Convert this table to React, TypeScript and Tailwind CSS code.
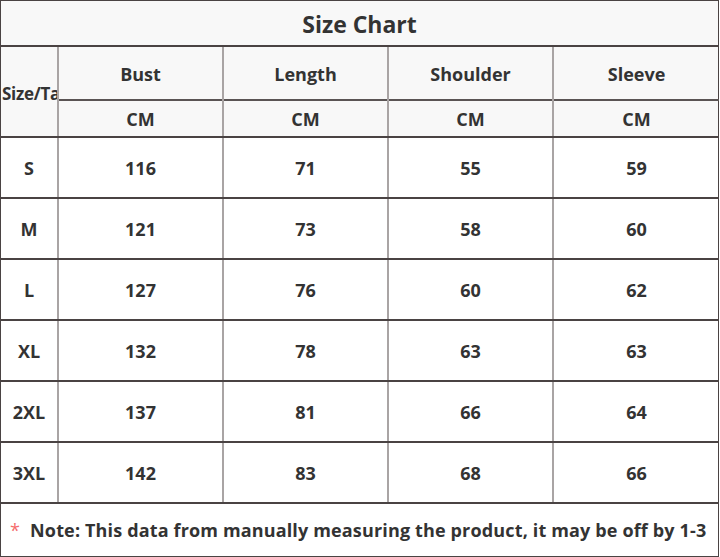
import React from "react";

const columns = ["Bust", "Length", "Shoulder", "Sleeve"];

const rows: [string, number[]][] = [
  ["S", [116, 71, 55, 59]],
  ["M", [121, 73, 58, 60]],
  ["L", [127, 76, 60, 62]],
  ["XL", [132, 78, 63, 63]],
  ["2XL", [137, 81, 66, 64]],
  ["3XL", [142, 83, 68, 66]],
];

export default function App() {
  return (
    <div className="w-[720px] h-[557px] bg-white text-[#333] font-['Open_Sans',sans-serif]">
      <div className="w-[719px] border border-[#4a4343]">
        {/* title */}
        <div className="h-[46px] pt-[3px] bg-[#f8f8f8] border-b-2 border-[#4a4343] flex items-center justify-center text-[23px] font-bold">
          Size Chart
        </div>

        {/* header */}
        <div className="flex h-[91px] bg-[#f8f8f8] border-b-2 border-[#4a4343]">
          <div className="w-[58px] shrink-0 border-r-2 border-[#a9a4a4] overflow-hidden whitespace-nowrap flex items-center pl-[1px] pt-[5px] text-[17px] font-bold tracking-[-0.3px]">
            Size/Tag
          </div>
          {columns.map((c, i) => (
            <div key={c} className={`w-[165px] shrink-0 flex flex-col ${i < 3 ? "border-r-2 border-[#a9a4a4]" : ""}`}>
              <div className="h-[54px] pt-[2px] flex items-center justify-center border-b-2 border-[#5a5454] text-[18px] font-bold">
                {c}
              </div>
              <div className="flex-1 pt-[2px] flex items-center justify-center text-[18px] font-bold">CM</div>
            </div>
          ))}
        </div>

        {/* data */}
        {rows.map(([size, vals]) => (
          <div key={size} className="flex h-[61px] border-b-2 border-[#4a4343]">
            <div className="w-[58px] shrink-0 pt-[2px] border-r-2 border-[#a9a4a4] flex items-center justify-center text-[18px] font-bold">
              {size}
            </div>
            {vals.map((v, i) => (
              <div
                key={i}
                className={`w-[165px] shrink-0 pt-[2px] flex items-center justify-center text-[18px] font-bold ${i < 3 ? "border-r-2 border-[#a9a4a4]" : ""}`}
              >
                {v}
              </div>
            ))}
          </div>
        ))}

        {/* note */}
        <div className="h-[52px] flex items-center pl-[9px] text-[18px] font-bold whitespace-nowrap tracking-[0.15px]">
          <span className="text-[#f56c6c] font-normal mr-[10px]">*</span>
          Note: This data from manually measuring the product, it may be off by 1-3
        </div>
      </div>
    </div>
  );
}
